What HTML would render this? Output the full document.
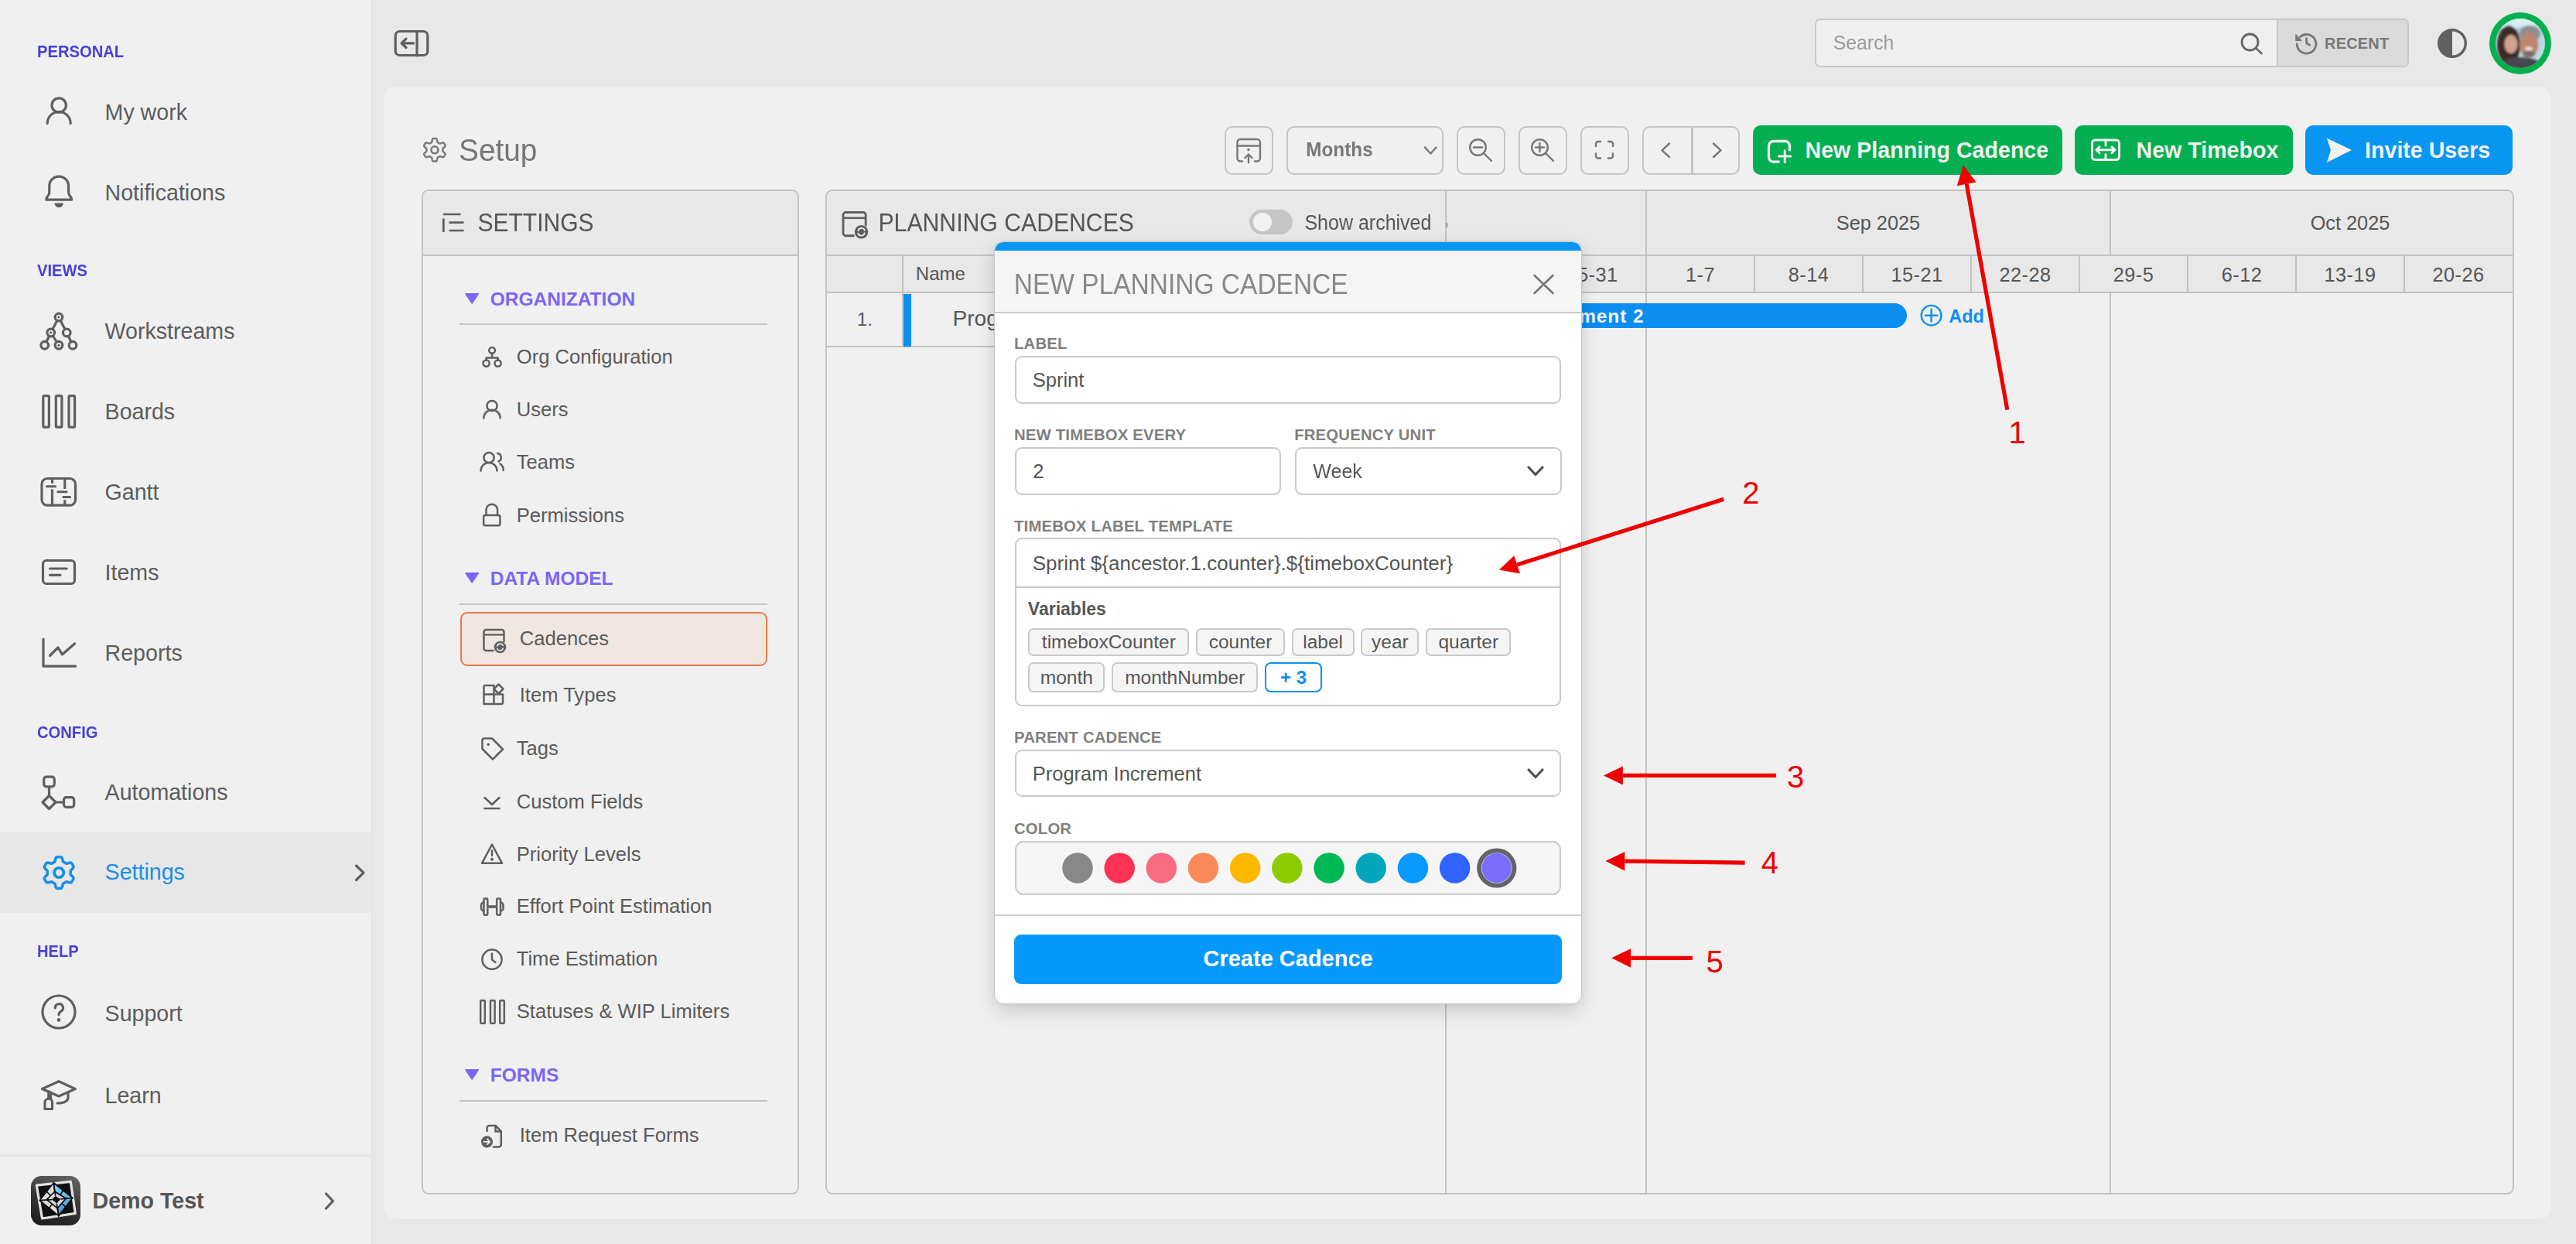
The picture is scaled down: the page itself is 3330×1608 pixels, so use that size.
<!DOCTYPE html>
<html><head><meta charset="utf-8"><style>
html,body{margin:0;padding:0;}
body{width:3330px;height:1608px;position:relative;overflow:hidden;background:#e8e8e8;font-family:"Liberation Sans", sans-serif;}
div{font-family:"Liberation Sans", sans-serif;}
svg{position:absolute;left:0;top:0;overflow:visible;}
</style></head><body>
<div style="position:absolute;left:0.00px;top:0.00px;width:480.00px;height:1608.00px;box-sizing:border-box;z-index:0;background:#f0f0f0"></div><div style="position:absolute;left:0.00px;top:1076.00px;width:480.00px;height:104.00px;box-sizing:border-box;z-index:0;background:#e7e7e7"></div><div style="position:absolute;left:479.50px;top:0.00px;width:1.50px;height:1608.00px;box-sizing:border-box;z-index:0;background:#e2e2e2"></div><div style="position:absolute;left:0.00px;top:1492.00px;width:480.00px;height:3.00px;box-sizing:border-box;z-index:0;background:#e6e6e6"></div><div style="position:absolute;left:47.99px;top:56.90px;font-size:20.2px;line-height:20.2px;font-weight:700;color:#4a3fd8;z-index:1;white-space:pre;letter-spacing:0px;transform:scaleY(1.08);transform-origin:0 17.10px">PERSONAL</div><div style="position:absolute;left:47.99px;top:340.40px;font-size:20.2px;line-height:20.2px;font-weight:700;color:#4a3fd8;z-index:1;white-space:pre;letter-spacing:0px;transform:scaleY(1.08);transform-origin:0 17.10px">VIEWS</div><div style="position:absolute;left:47.99px;top:936.90px;font-size:20.2px;line-height:20.2px;font-weight:700;color:#4a3fd8;z-index:1;white-space:pre;letter-spacing:0px;transform:scaleY(1.08);transform-origin:0 17.10px">CONFIG</div><div style="position:absolute;left:47.99px;top:1220.40px;font-size:20.2px;line-height:20.2px;font-weight:700;color:#4a3fd8;z-index:1;white-space:pre;letter-spacing:0px;transform:scaleY(1.08);transform-origin:0 17.10px">HELP</div><div style="position:absolute;left:135.57px;top:130.79px;font-size:28.6px;line-height:28.6px;font-weight:400;color:#5c5c5c;z-index:1;white-space:pre;">My work</div><div style="position:absolute;left:135.57px;top:234.79px;font-size:28.6px;line-height:28.6px;font-weight:400;color:#5c5c5c;z-index:1;white-space:pre;">Notifications</div><div style="position:absolute;left:135.57px;top:413.79px;font-size:28.6px;line-height:28.6px;font-weight:400;color:#5c5c5c;z-index:1;white-space:pre;">Workstreams</div><div style="position:absolute;left:135.57px;top:518.29px;font-size:28.6px;line-height:28.6px;font-weight:400;color:#5c5c5c;z-index:1;white-space:pre;">Boards</div><div style="position:absolute;left:135.57px;top:621.79px;font-size:28.6px;line-height:28.6px;font-weight:400;color:#5c5c5c;z-index:1;white-space:pre;">Gantt</div><div style="position:absolute;left:135.57px;top:725.79px;font-size:28.6px;line-height:28.6px;font-weight:400;color:#5c5c5c;z-index:1;white-space:pre;">Items</div><div style="position:absolute;left:135.57px;top:829.79px;font-size:28.6px;line-height:28.6px;font-weight:400;color:#5c5c5c;z-index:1;white-space:pre;">Reports</div><div style="position:absolute;left:135.57px;top:1009.79px;font-size:28.6px;line-height:28.6px;font-weight:400;color:#5c5c5c;z-index:1;white-space:pre;">Automations</div><div style="position:absolute;left:135.57px;top:1296.29px;font-size:28.6px;line-height:28.6px;font-weight:400;color:#5c5c5c;z-index:1;white-space:pre;">Support</div><div style="position:absolute;left:135.57px;top:1401.79px;font-size:28.6px;line-height:28.6px;font-weight:400;color:#5c5c5c;z-index:1;white-space:pre;">Learn</div><div style="position:absolute;left:135.57px;top:1113.29px;font-size:28.6px;line-height:28.6px;font-weight:400;color:#1a8fe8;z-index:1;white-space:pre;">Settings</div><div style="position:absolute;left:119.57px;top:1538.29px;font-size:28.6px;line-height:28.6px;font-weight:700;color:#555;z-index:1;white-space:pre;">Demo Test</div><div style="position:absolute;left:40.00px;top:1520.00px;width:64.00px;height:64.00px;box-sizing:border-box;z-index:1;background:linear-gradient(200deg,#6a6a6a 0%,#3a3a3a 45%,#1a1a1a 100%);border-radius:14px"></div><div style="position:absolute;left:2346.00px;top:24.00px;width:768.00px;height:63.00px;box-sizing:border-box;z-index:1;background:#efefef;border:2px solid #c8c8c8;border-radius:7px;overflow:hidden"><div style="position:absolute;left:595px;top:0;right:0;bottom:0;background:#dadada;border-left:2px solid #c8c8c8"></div></div><div style="position:absolute;left:2369.76px;top:44.01px;font-size:24.8px;line-height:24.8px;font-weight:400;color:#9a9a9a;z-index:2;white-space:pre;;transform:scaleY(1.05);transform-origin:0 20.99px">Search</div><div style="position:absolute;left:3005.00px;top:46.07px;font-size:20px;line-height:20px;font-weight:700;color:#777;z-index:2;white-space:pre;letter-spacing:0.2px">RECENT</div><div style="position:absolute;left:3218.00px;top:16.00px;width:80.00px;height:80.00px;box-sizing:border-box;z-index:1;border-radius:50%;background:#03b04d"></div><div style="position:absolute;left:496.00px;top:112.00px;width:2802.00px;height:1464.00px;box-sizing:border-box;z-index:0;background:#f0f0f0;border-radius:16px"></div><div style="position:absolute;left:593.06px;top:176.16px;font-size:38.8px;line-height:38.8px;font-weight:400;color:#777;z-index:1;white-space:pre;;transform:scaleY(1.05);transform-origin:0 32.84px">Setup</div><div style="position:absolute;left:1582.50px;top:162.50px;width:63.00px;height:63.00px;box-sizing:border-box;z-index:1;border:2px solid #c4c4c4;border-radius:10px;background:#f0f0f0"></div><div style="position:absolute;left:1662.50px;top:162.50px;width:203.00px;height:63.00px;box-sizing:border-box;z-index:1;border:2px solid #c4c4c4;border-radius:10px;background:#f0f0f0"></div><div style="position:absolute;left:1882.50px;top:162.50px;width:63.00px;height:63.00px;box-sizing:border-box;z-index:1;border:2px solid #c4c4c4;border-radius:10px;background:#f0f0f0"></div><div style="position:absolute;left:1962.50px;top:162.50px;width:63.00px;height:63.00px;box-sizing:border-box;z-index:1;border:2px solid #c4c4c4;border-radius:10px;background:#f0f0f0"></div><div style="position:absolute;left:2042.50px;top:162.50px;width:63.00px;height:63.00px;box-sizing:border-box;z-index:1;border:2px solid #c4c4c4;border-radius:10px;background:#f0f0f0"></div><div style="position:absolute;left:2122.50px;top:162.50px;width:126.50px;height:63.00px;box-sizing:border-box;z-index:1;border:2px solid #c4c4c4;border-radius:10px;background:#f0f0f0"></div><div style="position:absolute;left:2186.00px;top:164.00px;width:2.50px;height:60.00px;box-sizing:border-box;z-index:2;background:#c4c4c4"></div><div style="position:absolute;left:1688.29px;top:182.43px;font-size:24.3px;line-height:24.3px;font-weight:700;color:#777;z-index:2;white-space:pre;;transform:scaleY(1.04);transform-origin:0 20.57px">Months</div><div style="position:absolute;left:2266.00px;top:162.00px;width:399.50px;height:63.50px;box-sizing:border-box;z-index:1;background:#03af50;border-radius:10px"></div><div style="position:absolute;left:2682.00px;top:162.00px;width:282.00px;height:63.50px;box-sizing:border-box;z-index:1;background:#03af50;border-radius:10px"></div><div style="position:absolute;left:2980.00px;top:162.00px;width:268.00px;height:63.50px;box-sizing:border-box;z-index:1;background:#0896f2;border-radius:10px"></div><div style="position:absolute;left:2333.57px;top:179.79px;font-size:28.6px;line-height:28.6px;font-weight:700;color:#f2f2f2;z-index:2;white-space:pre;">New Planning Cadence</div><div style="position:absolute;left:2761.57px;top:179.79px;font-size:28.6px;line-height:28.6px;font-weight:700;color:#f2f2f2;z-index:2;white-space:pre;">New Timebox</div><div style="position:absolute;left:3057.07px;top:179.79px;font-size:28.6px;line-height:28.6px;font-weight:700;color:#f2f2f2;z-index:2;white-space:pre;">Invite Users</div><div style="position:absolute;left:544.50px;top:244.50px;width:488.50px;height:1299.50px;box-sizing:border-box;z-index:1;border:2px solid #c2c2c2;border-radius:9px;background:#f0f0f0;overflow:hidden"><div style="position:absolute;left:0;top:0;right:0;height:82px;background:#e8e8e8;border-bottom:2px solid #c2c2c2"></div></div><div style="position:absolute;left:617.50px;top:273.61px;font-size:30px;line-height:30px;font-weight:400;color:#555;z-index:2;white-space:pre;;transform:scaleY(1.1);transform-origin:0 25.39px">SETTINGS</div><div style="position:absolute;left:633.77px;top:375.26px;font-size:24.5px;line-height:24.5px;font-weight:700;color:#7b66f0;z-index:2;white-space:pre;">ORGANIZATION</div><div style="position:absolute;left:594.00px;top:418.00px;width:398.00px;height:2.20px;box-sizing:border-box;z-index:2;background:#c4c4c4"></div><div style="position:absolute;left:633.77px;top:736.26px;font-size:24.5px;line-height:24.5px;font-weight:700;color:#7b66f0;z-index:2;white-space:pre;">DATA MODEL</div><div style="position:absolute;left:594.00px;top:780.00px;width:398.00px;height:2.20px;box-sizing:border-box;z-index:2;background:#c4c4c4"></div><div style="position:absolute;left:633.77px;top:1378.26px;font-size:24.5px;line-height:24.5px;font-weight:700;color:#7b66f0;z-index:2;white-space:pre;">FORMS</div><div style="position:absolute;left:594.00px;top:1422.00px;width:398.00px;height:2.20px;box-sizing:border-box;z-index:2;background:#c4c4c4"></div><div style="position:absolute;left:594.50px;top:791.00px;width:397.00px;height:70.00px;box-sizing:border-box;z-index:2;border:2.5px solid #e8794a;border-radius:9px;background:#f0e6e1"></div><div style="position:absolute;left:667.72px;top:449.33px;font-size:25.6px;line-height:25.6px;font-weight:400;color:#5a5a5a;z-index:3;white-space:pre;">Org Configuration</div><div style="position:absolute;left:667.72px;top:517.33px;font-size:25.6px;line-height:25.6px;font-weight:400;color:#5a5a5a;z-index:3;white-space:pre;">Users</div><div style="position:absolute;left:667.72px;top:585.33px;font-size:25.6px;line-height:25.6px;font-weight:400;color:#5a5a5a;z-index:3;white-space:pre;">Teams</div><div style="position:absolute;left:667.72px;top:654.33px;font-size:25.6px;line-height:25.6px;font-weight:400;color:#5a5a5a;z-index:3;white-space:pre;">Permissions</div><div style="position:absolute;left:671.72px;top:812.93px;font-size:25.6px;line-height:25.6px;font-weight:400;color:#5a5a5a;z-index:3;white-space:pre;">Cadences</div><div style="position:absolute;left:671.72px;top:885.73px;font-size:25.6px;line-height:25.6px;font-weight:400;color:#5a5a5a;z-index:3;white-space:pre;">Item Types</div><div style="position:absolute;left:667.72px;top:955.33px;font-size:25.6px;line-height:25.6px;font-weight:400;color:#5a5a5a;z-index:3;white-space:pre;">Tags</div><div style="position:absolute;left:667.72px;top:1023.63px;font-size:25.6px;line-height:25.6px;font-weight:400;color:#5a5a5a;z-index:3;white-space:pre;">Custom Fields</div><div style="position:absolute;left:667.72px;top:1091.83px;font-size:25.6px;line-height:25.6px;font-weight:400;color:#5a5a5a;z-index:3;white-space:pre;">Priority Levels</div><div style="position:absolute;left:667.72px;top:1159.33px;font-size:25.6px;line-height:25.6px;font-weight:400;color:#5a5a5a;z-index:3;white-space:pre;">Effort Point Estimation</div><div style="position:absolute;left:667.72px;top:1227.33px;font-size:25.6px;line-height:25.6px;font-weight:400;color:#5a5a5a;z-index:3;white-space:pre;">Time Estimation</div><div style="position:absolute;left:667.72px;top:1295.33px;font-size:25.6px;line-height:25.6px;font-weight:400;color:#5a5a5a;z-index:3;white-space:pre;">Statuses &amp; WIP Limiters</div><div style="position:absolute;left:671.72px;top:1455.33px;font-size:25.6px;line-height:25.6px;font-weight:400;color:#5a5a5a;z-index:3;white-space:pre;">Item Request Forms</div><div style="position:absolute;left:1067.00px;top:244.50px;width:2183.20px;height:1299.50px;box-sizing:border-box;z-index:1;border:2px solid #c2c2c2;border-radius:9px;background:#f0f0f0;overflow:hidden"><div style="position:absolute;left:0;top:0;right:0;height:82px;background:#e8e8e8;border-bottom:2px solid #c2c2c2"></div><div style="position:absolute;left:0;top:84px;width:800px;height:46px;background:#e8e8e8;border-bottom:2px solid #c2c2c2"></div><div style="position:absolute;left:800px;top:84px;right:0;height:46px;background:#e8e8e8;border-bottom:2px solid #c2c2c2"></div><div style="position:absolute;left:0;top:132px;width:800px;height:68px;border-bottom:2px solid #c2c2c2"></div></div><div style="position:absolute;left:1135.49px;top:274.04px;font-size:30.2px;line-height:30.2px;font-weight:400;color:#555;z-index:3;white-space:pre;;transform:scaleY(1.1);transform-origin:0 25.56px">PLANNING CADENCES</div><div style="position:absolute;left:1614.80px;top:271.00px;width:55.80px;height:32.00px;box-sizing:border-box;z-index:3;background:#c6c6c6;border-radius:16px"><div style="position:absolute;left:5px;top:4px;width:24px;height:24px;border-radius:50%;background:#f2f2f2"></div></div><div style="position:absolute;left:1686.45px;top:276.24px;font-size:25px;line-height:25px;font-weight:400;color:#555;z-index:3;white-space:pre;;transform:scaleY(1.08);transform-origin:0 21.16px">Show archived</div><div style="position:absolute;left:1166.00px;top:329.00px;width:2.00px;height:118.00px;box-sizing:border-box;z-index:3;background:#c2c2c2"></div><div style="position:absolute;left:1183.80px;top:342.08px;font-size:24px;line-height:24px;font-weight:400;color:#555;z-index:3;white-space:pre;">Name</div><div style="position:absolute;left:1107.80px;top:401.08px;font-size:24px;line-height:24px;font-weight:400;color:#555;z-index:3;white-space:pre;">1.</div><div style="position:absolute;left:1168.00px;top:380.00px;width:10.30px;height:67.80px;box-sizing:border-box;z-index:3;background:#0a8ff0"></div><div style="position:absolute;left:1231.60px;top:398.30px;font-size:28px;line-height:28px;font-weight:400;color:#555;z-index:3;white-space:pre;">Program Increment 2</div><div style="position:absolute;left:1867.60px;top:244.50px;width:2.20px;height:1298.50px;box-sizing:border-box;z-index:4;background:#c2c2c2"></div><div style="position:absolute;left:2127.00px;top:244.50px;width:2.20px;height:84.50px;box-sizing:border-box;z-index:4;background:#c2c2c2"></div><div style="position:absolute;left:2127.00px;top:377.00px;width:2.20px;height:1166.00px;box-sizing:border-box;z-index:4;background:#c2c2c2"></div><div style="position:absolute;left:2727.00px;top:244.50px;width:2.20px;height:84.50px;box-sizing:border-box;z-index:4;background:#c2c2c2"></div><div style="position:absolute;left:2727.00px;top:377.00px;width:2.20px;height:1166.00px;box-sizing:border-box;z-index:4;background:#c2c2c2"></div><div style="position:absolute;left:1987.00px;top:330.00px;width:2.20px;height:47.00px;box-sizing:border-box;z-index:4;background:#c2c2c2"></div><div style="position:absolute;left:2127.00px;top:330.00px;width:2.20px;height:47.00px;box-sizing:border-box;z-index:4;background:#c2c2c2"></div><div style="position:absolute;left:2267.00px;top:330.00px;width:2.20px;height:47.00px;box-sizing:border-box;z-index:4;background:#c2c2c2"></div><div style="position:absolute;left:2407.00px;top:330.00px;width:2.20px;height:47.00px;box-sizing:border-box;z-index:4;background:#c2c2c2"></div><div style="position:absolute;left:2547.00px;top:330.00px;width:2.20px;height:47.00px;box-sizing:border-box;z-index:4;background:#c2c2c2"></div><div style="position:absolute;left:2687.00px;top:330.00px;width:2.20px;height:47.00px;box-sizing:border-box;z-index:4;background:#c2c2c2"></div><div style="position:absolute;left:2827.00px;top:330.00px;width:2.20px;height:47.00px;box-sizing:border-box;z-index:4;background:#c2c2c2"></div><div style="position:absolute;left:2967.00px;top:330.00px;width:2.20px;height:47.00px;box-sizing:border-box;z-index:4;background:#c2c2c2"></div><div style="position:absolute;left:3107.00px;top:330.00px;width:2.20px;height:47.00px;box-sizing:border-box;z-index:4;background:#c2c2c2"></div><div style="position:absolute;left:1869.8px;top:244.5px;width:1377px;height:140px;overflow:hidden;z-index:4"><div style="position:absolute;left:-251.80px;width:400px;text-align:center;top:31.08px;font-size:25.3px;line-height:25.3px;color:#555">Aug 2025</div><div style="position:absolute;left:358.20px;width:400px;text-align:center;top:31.08px;font-size:25.3px;line-height:25.3px;color:#555">Sep 2025</div><div style="position:absolute;left:968.20px;width:400px;text-align:center;top:31.08px;font-size:25.3px;line-height:25.3px;color:#555">Oct 2025</div><div style="position:absolute;left:-151.80px;width:400px;text-align:center;top:98.08px;font-size:25.3px;line-height:25.3px;color:#555;letter-spacing:0.5px">18-24</div><div style="position:absolute;left:-11.80px;width:400px;text-align:center;top:98.08px;font-size:25.3px;line-height:25.3px;color:#555;letter-spacing:0.5px">25-31</div><div style="position:absolute;left:128.20px;width:400px;text-align:center;top:98.08px;font-size:25.3px;line-height:25.3px;color:#555;letter-spacing:0.5px">1-7</div><div style="position:absolute;left:268.20px;width:400px;text-align:center;top:98.08px;font-size:25.3px;line-height:25.3px;color:#555;letter-spacing:0.5px">8-14</div><div style="position:absolute;left:408.20px;width:400px;text-align:center;top:98.08px;font-size:25.3px;line-height:25.3px;color:#555;letter-spacing:0.5px">15-21</div><div style="position:absolute;left:548.20px;width:400px;text-align:center;top:98.08px;font-size:25.3px;line-height:25.3px;color:#555;letter-spacing:0.5px">22-28</div><div style="position:absolute;left:688.20px;width:400px;text-align:center;top:98.08px;font-size:25.3px;line-height:25.3px;color:#555;letter-spacing:0.5px">29-5</div><div style="position:absolute;left:828.20px;width:400px;text-align:center;top:98.08px;font-size:25.3px;line-height:25.3px;color:#555;letter-spacing:0.5px">6-12</div><div style="position:absolute;left:968.20px;width:400px;text-align:center;top:98.08px;font-size:25.3px;line-height:25.3px;color:#555;letter-spacing:0.5px">13-19</div><div style="position:absolute;left:1108.20px;width:400px;text-align:center;top:98.08px;font-size:25.3px;line-height:25.3px;color:#555;letter-spacing:0.5px">20-26</div></div><div style="position:absolute;left:1880.00px;top:392.00px;width:584.50px;height:31.50px;box-sizing:border-box;z-index:5;background:#0a8ff0;border-radius:16px"></div><div style="position:absolute;right:1204.50px;top:396.76px;font-size:24.5px;line-height:24.5px;font-weight:700;color:#f4f4f4;z-index:6;white-space:pre;letter-spacing:0.9px">Program Increment 2</div><div style="position:absolute;left:2519.22px;top:397.61px;font-size:23.5px;line-height:23.5px;font-weight:700;color:#0a8ff0;z-index:6;white-space:pre;">Add</div><div style="position:absolute;left:1285.40px;top:311.50px;width:759.60px;height:986.00px;box-sizing:border-box;z-index:10;background:#fff;border:1.6px solid #c8c6c4;border-radius:12px;box-shadow:0 10px 24px rgba(0,0,0,0.15), 0 0 6px rgba(0,0,0,0.05);overflow:hidden"><div style="position:absolute;left:0;right:0;top:0;height:11.5px;background:#0896f5;border-radius:11px 11px 0 0"></div><div style="position:absolute;left:0;right:0;top:11.5px;height:79px;background:#f5f5f5;border-radius:10px 10px 0 0;border-bottom:2.5px solid #cbcbcb"></div><div style="position:absolute;left:0;right:0;top:869.5px;height:2px;background:#cdcdcd"></div></div><div style="position:absolute;left:1310.83px;top:352.04px;font-size:33.5px;line-height:33.5px;font-weight:400;color:#888;z-index:11;white-space:pre;;transform:scaleY(1.1);transform-origin:0 28.36px">NEW PLANNING CADENCE</div><div style="position:absolute;left:1310.98px;top:433.92px;font-size:20.3px;line-height:20.3px;font-weight:700;color:#7f7f7f;z-index:11;white-space:pre;letter-spacing:0.2px">LABEL</div><div style="position:absolute;left:1310.98px;top:551.82px;font-size:20.3px;line-height:20.3px;font-weight:700;color:#7f7f7f;z-index:11;white-space:pre;letter-spacing:0.2px">NEW TIMEBOX EVERY</div><div style="position:absolute;left:1673.18px;top:551.82px;font-size:20.3px;line-height:20.3px;font-weight:700;color:#7f7f7f;z-index:11;white-space:pre;letter-spacing:0.2px">FREQUENCY UNIT</div><div style="position:absolute;left:1310.98px;top:670.32px;font-size:20.3px;line-height:20.3px;font-weight:700;color:#7f7f7f;z-index:11;white-space:pre;letter-spacing:0.2px">TIMEBOX LABEL TEMPLATE</div><div style="position:absolute;left:1310.98px;top:942.52px;font-size:20.3px;line-height:20.3px;font-weight:700;color:#7f7f7f;z-index:11;white-space:pre;letter-spacing:0.2px">PARENT CADENCE</div><div style="position:absolute;left:1310.98px;top:1060.82px;font-size:20.3px;line-height:20.3px;font-weight:700;color:#7f7f7f;z-index:11;white-space:pre;letter-spacing:0.2px">COLOR</div><div style="position:absolute;left:1311.80px;top:459.80px;width:706.70px;height:62.20px;box-sizing:border-box;z-index:11;border:2px solid #c9c9c9;border-radius:9px;background:#fff"></div><div style="position:absolute;left:1334.72px;top:479.41px;font-size:25.5px;line-height:25.5px;font-weight:400;color:#555;z-index:12;white-space:pre;">Sprint</div><div style="position:absolute;left:1311.80px;top:578.00px;width:344.20px;height:62.00px;box-sizing:border-box;z-index:11;border:2px solid #c9c9c9;border-radius:9px;background:#fff"></div><div style="position:absolute;left:1335.32px;top:596.71px;font-size:25.5px;line-height:25.5px;font-weight:400;color:#555;z-index:12;white-space:pre;">2</div><div style="position:absolute;left:1674.00px;top:578.00px;width:344.50px;height:62.00px;box-sizing:border-box;z-index:11;border:2px solid #c9c9c9;border-radius:9px;background:#fff"></div><div style="position:absolute;left:1697.35px;top:597.14px;font-size:25px;line-height:25px;font-weight:400;color:#555;z-index:12;white-space:pre;;transform:scaleY(1.06);transform-origin:0 21.16px">Week</div><div style="position:absolute;left:1311.80px;top:695.40px;width:706.70px;height:217.60px;box-sizing:border-box;z-index:11;border:2px solid #c9c9c9;border-radius:9px;background:#fff"><div style="position:absolute;left:0;right:0;top:60.5px;height:2px;background:#c9c9c9"></div></div><div style="position:absolute;left:1334.70px;top:715.19px;font-size:26px;line-height:26px;font-weight:400;color:#555;z-index:12;white-space:pre;">Sprint ${ancestor.1.counter}.${timeboxCounter}</div><div style="position:absolute;left:1328.85px;top:775.63px;font-size:23px;line-height:23px;font-weight:700;color:#555;z-index:12;white-space:pre;">Variables</div><div style="position:absolute;left:1329.20px;top:812.20px;width:208.30px;height:35.40px;box-sizing:border-box;z-index:12;border:2px solid #c9c9c9;border-radius:7px;background:#f5f5f5"></div><div style="position:absolute;left:433.35px;width:2000px;text-align:center;top:818.36px;font-size:24.5px;line-height:24.5px;font-weight:400;color:#555;z-index:13;white-space:pre;">timeboxCounter</div><div style="position:absolute;left:1546.40px;top:812.20px;width:114.20px;height:35.40px;box-sizing:border-box;z-index:12;border:2px solid #c9c9c9;border-radius:7px;background:#f5f5f5"></div><div style="position:absolute;left:603.50px;width:2000px;text-align:center;top:818.36px;font-size:24.5px;line-height:24.5px;font-weight:400;color:#555;z-index:13;white-space:pre;">counter</div><div style="position:absolute;left:1669.50px;top:812.20px;width:81.20px;height:35.40px;box-sizing:border-box;z-index:12;border:2px solid #c9c9c9;border-radius:7px;background:#f5f5f5"></div><div style="position:absolute;left:710.10px;width:2000px;text-align:center;top:818.36px;font-size:24.5px;line-height:24.5px;font-weight:400;color:#555;z-index:13;white-space:pre;">label</div><div style="position:absolute;left:1759.40px;top:812.20px;width:74.90px;height:35.40px;box-sizing:border-box;z-index:12;border:2px solid #c9c9c9;border-radius:7px;background:#f5f5f5"></div><div style="position:absolute;left:796.85px;width:2000px;text-align:center;top:818.36px;font-size:24.5px;line-height:24.5px;font-weight:400;color:#555;z-index:13;white-space:pre;">year</div><div style="position:absolute;left:1843.30px;top:812.20px;width:110.00px;height:35.40px;box-sizing:border-box;z-index:12;border:2px solid #c9c9c9;border-radius:7px;background:#f5f5f5"></div><div style="position:absolute;left:898.30px;width:2000px;text-align:center;top:818.36px;font-size:24.5px;line-height:24.5px;font-weight:400;color:#555;z-index:13;white-space:pre;">quarter</div><div style="position:absolute;left:1329.20px;top:856.30px;width:99.30px;height:39.10px;box-sizing:border-box;z-index:12;border:2px solid #c9c9c9;border-radius:7px;background:#f5f5f5"></div><div style="position:absolute;left:378.85px;width:2000px;text-align:center;top:864.06px;font-size:24.5px;line-height:24.5px;font-weight:400;color:#555;z-index:13;white-space:pre;">month</div><div style="position:absolute;left:1437.20px;top:856.30px;width:189.10px;height:39.10px;box-sizing:border-box;z-index:12;border:2px solid #c9c9c9;border-radius:7px;background:#f5f5f5"></div><div style="position:absolute;left:531.75px;width:2000px;text-align:center;top:864.06px;font-size:24.5px;line-height:24.5px;font-weight:400;color:#555;z-index:13;white-space:pre;">monthNumber</div><div style="position:absolute;left:1635.30px;top:856.30px;width:73.40px;height:39.10px;box-sizing:border-box;z-index:12;border:2.5px solid #0a8ff0;border-radius:8px;background:#fff"></div><div style="position:absolute;left:672.00px;width:2000px;text-align:center;top:864.48px;font-size:24px;line-height:24px;font-weight:700;color:#0a8ff0;z-index:13;white-space:pre;">+ 3</div><div style="position:absolute;left:1311.80px;top:968.70px;width:706.70px;height:61.80px;box-sizing:border-box;z-index:11;border:2px solid #c9c9c9;border-radius:9px;background:#fff"></div><div style="position:absolute;left:1334.72px;top:988.01px;font-size:25.5px;line-height:25.5px;font-weight:400;color:#555;z-index:12;white-space:pre;">Program Increment</div><div style="position:absolute;left:1312.00px;top:1087.00px;width:706.20px;height:70.00px;box-sizing:border-box;z-index:11;border:2px solid #c9c9c9;border-radius:11px;background:#f5f5f5"></div><div style="position:absolute;left:1311.40px;top:1208.00px;width:707.40px;height:63.50px;box-sizing:border-box;z-index:11;background:#0599fe;border-radius:9px"></div><div style="position:absolute;left:665.10px;width:2000px;text-align:center;top:1225.45px;font-size:29px;line-height:29px;font-weight:700;color:#ffffff;z-index:12;white-space:pre;">Create Cadence</div><div style="position:absolute;left:2596.40px;top:539.14px;font-size:40px;line-height:40px;font-weight:400;color:#ee0000;z-index:21;white-space:pre;">1</div><div style="position:absolute;left:2252.30px;top:617.34px;font-size:40px;line-height:40px;font-weight:400;color:#ee0000;z-index:21;white-space:pre;">2</div><div style="position:absolute;left:2310.00px;top:984.04px;font-size:40px;line-height:40px;font-weight:400;color:#ee0000;z-index:21;white-space:pre;">3</div><div style="position:absolute;left:2276.70px;top:1094.64px;font-size:40px;line-height:40px;font-weight:400;color:#ee0000;z-index:21;white-space:pre;">4</div><div style="position:absolute;left:2205.40px;top:1223.24px;font-size:40px;line-height:40px;font-weight:400;color:#ee0000;z-index:21;white-space:pre;">5</div>
<svg width="3330" height="1608" viewBox="0 0 3330 1608" style="z-index:5"><circle cx="76.2" cy="136" r="9.2" fill="none" stroke="#5f5f5f" stroke-width="3.2" stroke-linecap="round" stroke-linejoin="round"/><path d="M61.2 159.5 a15 15 0 0 1 30 0" fill="none" stroke="#5f5f5f" stroke-width="3.2" stroke-linecap="round" stroke-linejoin="round"/><path d="M59.8 258.2 Q59.8 255.5 62.5 252.5 Q63.8 251 63.8 247.5 V240.5 A12.4 12.4 0 0 1 88.6 240.5 V247.5 Q88.6 251 89.9 252.5 Q92.6 255.5 92.6 258.2 Z" fill="none" stroke="#5f5f5f" stroke-width="3.2" stroke-linecap="round" stroke-linejoin="round"/><path d="M70.5 262.5 h11.4 a5.7 5.7 0 0 1 -11.4 0z" fill="#5f5f5f"/><line x1="73.72" y1="414.45" x2="68.03" y2="425.55" fill="none" stroke="#5f5f5f" stroke-width="3.2" stroke-linecap="round" stroke-linejoin="round" stroke-width="2.8"/><line x1="78.28" y1="414.45" x2="83.97" y2="425.55" fill="none" stroke="#5f5f5f" stroke-width="3.2" stroke-linecap="round" stroke-linejoin="round" stroke-width="2.8"/><line x1="63.54" y1="434.49" x2="59.96" y2="441.76" fill="none" stroke="#5f5f5f" stroke-width="3.2" stroke-linecap="round" stroke-linejoin="round" stroke-width="2.8"/><line x1="68.42" y1="434.23" x2="73.33" y2="442.02" fill="none" stroke="#5f5f5f" stroke-width="3.2" stroke-linecap="round" stroke-linejoin="round" stroke-width="2.8"/><line x1="88.40" y1="434.51" x2="91.85" y2="441.74" fill="none" stroke="#5f5f5f" stroke-width="3.2" stroke-linecap="round" stroke-linejoin="round" stroke-width="2.8"/><circle cx="76" cy="410" r="4.8" fill="none" stroke="#5f5f5f" stroke-width="3.2" stroke-linecap="round" stroke-linejoin="round" stroke-width="2.8"/><circle cx="76" cy="410" r="1.6" fill="#5f5f5f"/><circle cx="65.75" cy="430" r="4.8" fill="none" stroke="#5f5f5f" stroke-width="3.2" stroke-linecap="round" stroke-linejoin="round" stroke-width="2.8"/><circle cx="65.75" cy="430" r="1.6" fill="#5f5f5f"/><circle cx="86.25" cy="430" r="4.8" fill="none" stroke="#5f5f5f" stroke-width="3.2" stroke-linecap="round" stroke-linejoin="round" stroke-width="2.8"/><circle cx="57.75" cy="446.25" r="4.8" fill="none" stroke="#5f5f5f" stroke-width="3.2" stroke-linecap="round" stroke-linejoin="round" stroke-width="2.8"/><circle cx="76" cy="446.25" r="4.8" fill="none" stroke="#5f5f5f" stroke-width="3.2" stroke-linecap="round" stroke-linejoin="round" stroke-width="2.8"/><circle cx="76" cy="446.25" r="1.6" fill="#5f5f5f"/><circle cx="94" cy="446.25" r="4.8" fill="none" stroke="#5f5f5f" stroke-width="3.2" stroke-linecap="round" stroke-linejoin="round" stroke-width="2.8"/><rect x="55.8" y="511.6" width="7.6" height="40.6" rx="1.6" fill="none" stroke="#5f5f5f" stroke-width="3.2" stroke-linecap="round" stroke-linejoin="round" stroke-width="3"/><rect x="72.3" y="511.6" width="7.6" height="40.6" rx="1.6" fill="none" stroke="#5f5f5f" stroke-width="3.2" stroke-linecap="round" stroke-linejoin="round" stroke-width="3"/><rect x="89" y="511.6" width="7.6" height="40.6" rx="1.6" fill="none" stroke="#5f5f5f" stroke-width="3.2" stroke-linecap="round" stroke-linejoin="round" stroke-width="3"/><rect x="54" y="618.5" width="43.5" height="34.6" rx="7" fill="none" stroke="#5f5f5f" stroke-width="3.2" stroke-linecap="round" stroke-linejoin="round" stroke-width="3"/><path d="M67.5 620 V652 M83.75 620 V652" fill="none" stroke="#5f5f5f" stroke-width="3.2" stroke-linecap="round" stroke-linejoin="round" stroke-width="2.8"/><path d="M59.5 628.75 H72.5 M74 635.75 H87 M81 642.5 H91.5" stroke="#f0f0f0" stroke-width="7.5" stroke-linecap="round"/><path d="M60.5 628.75 H71.5 M75 635.75 H86 M82 642.5 H90.5" fill="none" stroke="#5f5f5f" stroke-width="3.2" stroke-linecap="round" stroke-linejoin="round" stroke-width="3.6"/><rect x="55.5" y="724.5" width="41" height="30" rx="4.5" fill="none" stroke="#5f5f5f" stroke-width="3.2" stroke-linecap="round" stroke-linejoin="round" stroke-width="3"/><path d="M64.5 735 H86.2 M64.5 743.3 H78" fill="none" stroke="#5f5f5f" stroke-width="3.2" stroke-linecap="round" stroke-linejoin="round" stroke-width="3.2"/><path d="M56 826 V861.2 H97.5" fill="none" stroke="#5f5f5f" stroke-width="3.2" stroke-linecap="round" stroke-linejoin="round" stroke-width="3" stroke-linecap="butt"/><path d="M64.5 847.5 L75 837 L80.5 846 L96.5 832" fill="none" stroke="#5f5f5f" stroke-width="3.2" stroke-linecap="round" stroke-linejoin="round" stroke-width="3.2"/><rect x="56.7" y="1004.2" width="13.6" height="12.6" rx="3.2" fill="none" stroke="#5f5f5f" stroke-width="3.2" stroke-linecap="round" stroke-linejoin="round" stroke-width="2.8"/><path d="M63.5 1017 V1028.5" fill="none" stroke="#5f5f5f" stroke-width="3.2" stroke-linecap="round" stroke-linejoin="round" stroke-width="2.8"/><path d="M63.5 1028.5 L72 1037 L63.5 1045.5 L55 1037 Z" fill="none" stroke="#5f5f5f" stroke-width="3.2" stroke-linecap="round" stroke-linejoin="round" stroke-width="2.8"/><path d="M72 1037 H82" fill="none" stroke="#5f5f5f" stroke-width="3.2" stroke-linecap="round" stroke-linejoin="round" stroke-width="2.8"/><rect x="82.5" y="1030.7" width="13.2" height="12.6" rx="3.2" fill="none" stroke="#5f5f5f" stroke-width="3.2" stroke-linecap="round" stroke-linejoin="round" stroke-width="2.8"/><path d="M76.20 1107.70 L76.73 1107.71 L77.26 1107.73 L77.79 1107.76 L78.32 1107.81 L78.85 1107.89 L79.35 1108.14 L79.80 1108.59 L80.19 1109.24 L80.51 1110.05 L80.77 1110.95 L80.98 1111.85 L81.18 1112.67 L81.39 1113.33 L81.64 1113.82 L81.95 1114.12 L82.30 1114.30 L82.66 1114.46 L83.01 1114.63 L83.36 1114.82 L83.70 1115.01 L84.04 1115.21 L84.37 1115.42 L84.70 1115.64 L85.02 1115.86 L85.34 1116.08 L85.76 1116.20 L86.30 1116.17 L86.99 1116.02 L87.79 1115.78 L88.68 1115.52 L89.59 1115.30 L90.45 1115.17 L91.21 1115.18 L91.83 1115.34 L92.29 1115.65 L92.62 1116.07 L92.93 1116.50 L93.23 1116.94 L93.51 1117.39 L93.78 1117.85 L94.04 1118.31 L94.29 1118.78 L94.52 1119.26 L94.74 1119.74 L94.94 1120.24 L94.98 1120.79 L94.81 1121.41 L94.44 1122.07 L93.90 1122.76 L93.25 1123.43 L92.58 1124.07 L91.97 1124.65 L91.50 1125.16 L91.20 1125.62 L91.09 1126.04 L91.12 1126.43 L91.15 1126.82 L91.18 1127.21 L91.19 1127.61 L91.20 1128.00 L91.19 1128.39 L91.18 1128.79 L91.15 1129.18 L91.12 1129.57 L91.09 1129.96 L91.20 1130.38 L91.50 1130.84 L91.97 1131.35 L92.58 1131.93 L93.25 1132.57 L93.90 1133.24 L94.44 1133.93 L94.81 1134.59 L94.98 1135.21 L94.94 1135.76 L94.74 1136.26 L94.52 1136.74 L94.29 1137.22 L94.04 1137.69 L93.78 1138.15 L93.51 1138.61 L93.23 1139.06 L92.93 1139.50 L92.62 1139.93 L92.29 1140.35 L91.83 1140.66 L91.21 1140.82 L90.45 1140.83 L89.59 1140.70 L88.68 1140.48 L87.79 1140.22 L86.99 1139.98 L86.30 1139.83 L85.76 1139.80 L85.34 1139.92 L85.02 1140.14 L84.70 1140.36 L84.37 1140.58 L84.04 1140.79 L83.70 1140.99 L83.36 1141.18 L83.01 1141.37 L82.66 1141.54 L82.30 1141.70 L81.95 1141.88 L81.64 1142.18 L81.39 1142.67 L81.18 1143.33 L80.98 1144.15 L80.77 1145.05 L80.51 1145.95 L80.19 1146.76 L79.80 1147.41 L79.35 1147.86 L78.85 1148.11 L78.32 1148.19 L77.79 1148.24 L77.26 1148.27 L76.73 1148.29 L76.20 1148.30 L75.67 1148.29 L75.14 1148.27 L74.61 1148.24 L74.08 1148.19 L73.55 1148.11 L73.05 1147.86 L72.60 1147.41 L72.21 1146.76 L71.89 1145.95 L71.63 1145.05 L71.42 1144.15 L71.22 1143.33 L71.01 1142.67 L70.76 1142.18 L70.45 1141.88 L70.10 1141.70 L69.74 1141.54 L69.39 1141.37 L69.04 1141.18 L68.70 1140.99 L68.36 1140.79 L68.03 1140.58 L67.70 1140.36 L67.38 1140.14 L67.06 1139.92 L66.64 1139.80 L66.10 1139.83 L65.41 1139.98 L64.61 1140.22 L63.72 1140.48 L62.81 1140.70 L61.95 1140.83 L61.19 1140.82 L60.57 1140.66 L60.11 1140.35 L59.78 1139.93 L59.47 1139.50 L59.17 1139.06 L58.89 1138.61 L58.62 1138.15 L58.36 1137.69 L58.11 1137.22 L57.88 1136.74 L57.66 1136.26 L57.46 1135.76 L57.42 1135.21 L57.59 1134.59 L57.96 1133.93 L58.50 1133.24 L59.15 1132.57 L59.82 1131.93 L60.43 1131.35 L60.90 1130.84 L61.20 1130.38 L61.31 1129.96 L61.28 1129.57 L61.25 1129.18 L61.22 1128.79 L61.21 1128.39 L61.20 1128.00 L61.21 1127.61 L61.22 1127.21 L61.25 1126.82 L61.28 1126.43 L61.31 1126.04 L61.20 1125.62 L60.90 1125.16 L60.43 1124.65 L59.82 1124.07 L59.15 1123.43 L58.50 1122.76 L57.96 1122.07 L57.59 1121.41 L57.42 1120.79 L57.46 1120.24 L57.66 1119.74 L57.88 1119.26 L58.11 1118.78 L58.36 1118.31 L58.62 1117.85 L58.89 1117.39 L59.17 1116.94 L59.47 1116.50 L59.78 1116.07 L60.11 1115.65 L60.57 1115.34 L61.19 1115.18 L61.95 1115.17 L62.81 1115.30 L63.72 1115.52 L64.61 1115.78 L65.41 1116.02 L66.10 1116.17 L66.64 1116.20 L67.06 1116.08 L67.38 1115.86 L67.70 1115.64 L68.03 1115.42 L68.36 1115.21 L68.70 1115.01 L69.04 1114.82 L69.39 1114.63 L69.74 1114.46 L70.10 1114.30 L70.45 1114.12 L70.76 1113.82 L71.01 1113.33 L71.22 1112.67 L71.42 1111.85 L71.63 1110.95 L71.89 1110.05 L72.21 1109.24 L72.60 1108.59 L73.05 1108.14 L73.55 1107.89 L74.08 1107.81 L74.61 1107.76 L75.14 1107.73 L75.67 1107.71Z" fill="none" stroke="#1a8fe8" stroke-width="3.6" stroke-linejoin="round"/><circle cx="76.2" cy="1128" r="6.1" fill="none" stroke="#1a8fe8" stroke-width="3.8"/><path d="M460.5 1119 L470 1128.2 L460.5 1137.5" fill="none" stroke="#5f5f5f" stroke-width="3.2" stroke-linecap="round" stroke-linejoin="round" stroke="#555" stroke-width="3"/><circle cx="76" cy="1308" r="21" fill="none" stroke="#5f5f5f" stroke-width="3.2" stroke-linecap="round" stroke-linejoin="round" stroke-width="4.2"/><path d="M71.3 1302.8 a5.1 5.1 0 1 1 7.6 4.4 c-2 1.3 -2.9 2.3 -2.9 4.6" fill="none" stroke="#5f5f5f" stroke-width="3.2" stroke-linecap="round" stroke-linejoin="round" stroke-width="3.6"/><circle cx="76" cy="1318.4" r="2.3" fill="#5f5f5f"/><path d="M54.5 1407.5 L76 1397.8 L97.3 1407.5 L76 1417 Z" fill="none" stroke="#5f5f5f" stroke-width="3.2" stroke-linecap="round" stroke-linejoin="round" stroke-width="3"/><path d="M65.5 1412 V1420 M88 1412 V1418.5 Q88 1426 74 1426" fill="none" stroke="#5f5f5f" stroke-width="3.2" stroke-linecap="round" stroke-linejoin="round" stroke-width="3"/><path d="M62.8 1410.5 V1420" fill="none" stroke="#5f5f5f" stroke-width="3.2" stroke-linecap="round" stroke-linejoin="round" stroke-width="3.2"/><path d="M58 1433.5 V1425 a4.75 4.75 0 0 1 9.5 0 V1433.5 Z" fill="none" stroke="#5f5f5f" stroke-width="3.2" stroke-linecap="round" stroke-linejoin="round" stroke-width="3.4"/><defs><linearGradient id="lgb" x1="0" y1="0" x2="0" y2="1"><stop offset="0" stop-color="#7fd3f0"/><stop offset="1" stop-color="#3d98de"/></linearGradient></defs><polygon points="47.3,1532.2 91.3,1527.3 97.3,1568.4 54.5,1575" fill="#101010" stroke="#e2e2e2" stroke-width="3.2" stroke-linejoin="round"/><polygon points="69.30,1529.00 93.60,1548.40 75.90,1571.60 51.30,1551.60" fill="#dcdcdc" stroke="#0c0c0c" stroke-width="1.6"/><polygon points="69.30,1529.00 93.60,1548.40 75.90,1571.60 74.20,1561.70 85.20,1549.30 70.70,1540.30" fill="url(#lgb)" stroke="#0c0c0c" stroke-width="1.6"/><polygon points="70.70,1540.30 85.20,1549.30 74.20,1561.70 60.30,1550.70" fill="#d8d8d8" stroke="#0c0c0c" stroke-width="1.6"/><polygon points="71.69,1545.91 78.22,1549.96 73.27,1555.54 67.01,1550.59" fill="#0e0e0e"/><line x1="69.3" y1="1529" x2="71.69" y2="1545.91" stroke="#0c0c0c" stroke-width="1.6"/><line x1="93.6" y1="1548.4" x2="78.22" y2="1549.96" stroke="#0c0c0c" stroke-width="1.6"/><line x1="75.9" y1="1571.6" x2="73.27" y2="1555.54" stroke="#0c0c0c" stroke-width="1.6"/><line x1="51.3" y1="1551.6" x2="67.01" y2="1550.59" stroke="#0c0c0c" stroke-width="1.6"/><line x1="81.45" y1="1538.70" x2="77.95" y2="1544.80" stroke="#0c0c0c" stroke-width="1.6"/><line x1="84.75" y1="1560.00" x2="79.70" y2="1555.50" stroke="#0c0c0c" stroke-width="1.6"/><line x1="63.60" y1="1561.60" x2="67.25" y2="1556.20" stroke="#0c0c0c" stroke-width="1.6"/><line x1="60.30" y1="1540.30" x2="65.50" y2="1545.50" stroke="#0c0c0c" stroke-width="1.6"/><path d="M421.5 1543 L430.5 1552.5 L421.5 1562" fill="none" stroke="#5f5f5f" stroke-width="3.2" stroke-linecap="round" stroke-linejoin="round" stroke="#555" stroke-width="3"/><rect x="511.2" y="40.5" width="41.6" height="31" rx="5.6" fill="none" stroke="#5f5f5f" stroke-width="3.2" stroke-linecap="round" stroke-linejoin="round" stroke-width="2.9"/><path d="M539 41 V72" fill="none" stroke="#5f5f5f" stroke-width="3.2" stroke-linecap="round" stroke-linejoin="round" stroke-width="2.9"/><path d="M534.5 55.8 H519 M525 50.2 L519 55.8 L525 61.5" fill="none" stroke="#5f5f5f" stroke-width="3.2" stroke-linecap="round" stroke-linejoin="round" stroke-width="2.9"/><circle cx="2908.5" cy="54.5" r="10.5" fill="none" stroke="#666" stroke-width="2.8"/><path d="M2916.5 62.5 L2923.5 69" stroke="#666" stroke-width="2.8" stroke-linecap="round"/><path d="M2969.3 57 A12.3 12.3 0 1 0 2973.5 47.5" fill="none" stroke="#777" stroke-width="2.9" stroke-linecap="round"/><path d="M2967.8 44.5 L2967.8 52.8 L2975.3 52.3 Z" fill="#777" stroke="#777" stroke-width="1" stroke-linejoin="round"/><path d="M2981.6 50 V55.8 L2985.8 58.3" fill="none" stroke="#777" stroke-width="2.9" stroke-linecap="round" stroke-linejoin="round"/><circle cx="3170" cy="56" r="17.3" fill="none" stroke="#616161" stroke-width="3.4"/><path d="M3170 38.7 A17.3 17.3 0 0 0 3170 73.3 Z" fill="#616161"/><defs><clipPath id="avc"><circle cx="3258" cy="56" r="32"/></clipPath><filter id="avb" x="-20%" y="-20%" width="140%" height="140%"><feGaussianBlur stdDeviation="1.6"/></filter></defs><g clip-path="url(#avc)"><rect x="3220" y="20" width="80" height="80" fill="#b8dbe6"/><g filter="url(#avb)"><rect x="3220" y="20" width="80" height="16" fill="#d4eef4"/><path d="M3226 40 L3290 30 L3292 45 L3240 55 Z" fill="#9fb8c2" opacity="0.6"/><ellipse cx="3243" cy="58" rx="15" ry="25" fill="#3a2a26"/><ellipse cx="3246" cy="57" rx="8.5" ry="12" fill="#d2a08e"/><ellipse cx="3270" cy="44" rx="13" ry="11" fill="#8e8e92"/><ellipse cx="3269" cy="58" rx="12" ry="16" fill="#bb8570"/><ellipse cx="3269" cy="70" rx="8" ry="4" fill="#7d6a62"/><ellipse cx="3258" cy="92" rx="34" ry="18" fill="#48454d"/><ellipse cx="3269" cy="63" rx="5" ry="2.5" fill="#e8e0d8"/></g></g><path d="M561.90 179.00 L562.29 179.01 L562.67 179.02 L563.06 179.05 L563.45 179.08 L563.83 179.14 L564.19 179.33 L564.51 179.69 L564.79 180.21 L565.01 180.86 L565.17 181.58 L565.31 182.30 L565.43 182.95 L565.56 183.48 L565.72 183.85 L565.92 184.09 L566.17 184.21 L566.42 184.32 L566.67 184.44 L566.91 184.57 L567.15 184.71 L567.39 184.85 L567.62 184.99 L567.85 185.15 L568.07 185.31 L568.30 185.46 L568.60 185.52 L569.01 185.47 L569.54 185.32 L570.16 185.10 L570.84 184.86 L571.55 184.64 L572.22 184.51 L572.81 184.48 L573.28 184.58 L573.63 184.80 L573.87 185.10 L574.10 185.42 L574.31 185.74 L574.52 186.07 L574.72 186.40 L574.91 186.74 L575.09 187.08 L575.26 187.43 L575.42 187.78 L575.56 188.14 L575.57 188.55 L575.42 189.01 L575.11 189.51 L574.66 190.02 L574.12 190.53 L573.56 191.00 L573.06 191.43 L572.67 191.80 L572.42 192.13 L572.33 192.43 L572.34 192.70 L572.37 192.98 L572.39 193.25 L572.40 193.53 L572.40 193.80 L572.40 194.07 L572.39 194.35 L572.37 194.62 L572.34 194.90 L572.33 195.17 L572.42 195.47 L572.67 195.80 L573.06 196.17 L573.56 196.60 L574.12 197.07 L574.66 197.58 L575.11 198.09 L575.42 198.59 L575.57 199.05 L575.56 199.46 L575.42 199.82 L575.26 200.17 L575.09 200.52 L574.91 200.86 L574.72 201.20 L574.52 201.53 L574.31 201.86 L574.10 202.18 L573.87 202.50 L573.63 202.80 L573.28 203.02 L572.81 203.12 L572.22 203.09 L571.55 202.96 L570.84 202.74 L570.16 202.50 L569.54 202.28 L569.01 202.13 L568.60 202.08 L568.30 202.14 L568.07 202.29 L567.85 202.45 L567.62 202.61 L567.39 202.75 L567.15 202.89 L566.91 203.03 L566.67 203.16 L566.42 203.28 L566.17 203.39 L565.92 203.51 L565.72 203.75 L565.56 204.12 L565.43 204.65 L565.31 205.30 L565.17 206.02 L565.01 206.74 L564.79 207.39 L564.51 207.91 L564.19 208.27 L563.83 208.46 L563.45 208.52 L563.06 208.55 L562.67 208.58 L562.29 208.59 L561.90 208.60 L561.51 208.59 L561.13 208.58 L560.74 208.55 L560.35 208.52 L559.97 208.46 L559.61 208.27 L559.29 207.91 L559.01 207.39 L558.79 206.74 L558.63 206.02 L558.49 205.30 L558.37 204.65 L558.24 204.12 L558.08 203.75 L557.88 203.51 L557.63 203.39 L557.38 203.28 L557.13 203.16 L556.89 203.03 L556.65 202.89 L556.41 202.75 L556.18 202.61 L555.95 202.45 L555.73 202.29 L555.50 202.14 L555.20 202.08 L554.79 202.13 L554.26 202.28 L553.64 202.50 L552.96 202.74 L552.25 202.96 L551.58 203.09 L550.99 203.12 L550.52 203.02 L550.17 202.80 L549.93 202.50 L549.70 202.18 L549.49 201.86 L549.28 201.53 L549.08 201.20 L548.89 200.86 L548.71 200.52 L548.54 200.17 L548.38 199.82 L548.24 199.46 L548.23 199.05 L548.38 198.59 L548.69 198.09 L549.14 197.58 L549.68 197.07 L550.24 196.60 L550.74 196.17 L551.13 195.80 L551.38 195.47 L551.47 195.17 L551.46 194.90 L551.43 194.62 L551.41 194.35 L551.40 194.07 L551.40 193.80 L551.40 193.53 L551.41 193.25 L551.43 192.98 L551.46 192.70 L551.47 192.43 L551.38 192.13 L551.13 191.80 L550.74 191.43 L550.24 191.00 L549.68 190.53 L549.14 190.02 L548.69 189.51 L548.38 189.01 L548.23 188.55 L548.24 188.14 L548.38 187.78 L548.54 187.43 L548.71 187.08 L548.89 186.74 L549.08 186.40 L549.28 186.07 L549.49 185.74 L549.70 185.42 L549.93 185.10 L550.17 184.80 L550.52 184.58 L550.99 184.48 L551.58 184.51 L552.25 184.64 L552.96 184.86 L553.64 185.10 L554.26 185.32 L554.79 185.47 L555.20 185.52 L555.50 185.46 L555.73 185.31 L555.95 185.15 L556.18 184.99 L556.41 184.85 L556.65 184.71 L556.89 184.57 L557.13 184.44 L557.38 184.32 L557.63 184.21 L557.88 184.09 L558.08 183.85 L558.24 183.48 L558.37 182.95 L558.49 182.30 L558.63 181.58 L558.79 180.86 L559.01 180.21 L559.29 179.69 L559.61 179.33 L559.97 179.14 L560.35 179.08 L560.74 179.05 L561.13 179.02 L561.51 179.01Z" fill="none" stroke="#7a7a7a" stroke-width="2.5" stroke-linejoin="round"/><circle cx="561.9" cy="193.8" r="4.5" fill="none" stroke="#7a7a7a" stroke-width="2.6"/><path d="M1606 208.5 H1603.5 a4 4 0 0 1 -4 -4 V184 a4 4 0 0 1 4 -4 H1625 a4 4 0 0 1 4 4 V204.5 a4 4 0 0 1 -4 4 H1622" fill="none" stroke="#777" stroke-width="2.4" stroke-linecap="round" stroke-linejoin="round"/><path d="M1599.5 188.5 H1629" fill="none" stroke="#777" stroke-width="2.4" stroke-linecap="round" stroke-linejoin="round"/><path d="M1614 210 V200 M1609.5 204 L1614 199.5 L1618.5 204" fill="none" stroke="#777" stroke-width="2.4" stroke-linecap="round" stroke-linejoin="round"/><circle cx="1614" cy="193.5" r="1.7" fill="#777"/><path d="M1842 190.5 L1849.3 198.5 L1856.5 190.5" fill="none" stroke="#777" stroke-width="2.4" stroke-linecap="round" stroke-linejoin="round"/><circle cx="1910.5" cy="190.5" r="10.3" fill="none" stroke="#777" stroke-width="2.4" stroke-linecap="round" stroke-linejoin="round"/><path d="M1918 198 L1928 208" fill="none" stroke="#777" stroke-width="2.4" stroke-linecap="round" stroke-linejoin="round"/><path d="M1905 190.5 H1916" fill="none" stroke="#777" stroke-width="2.4" stroke-linecap="round" stroke-linejoin="round"/><circle cx="1990.5" cy="190.5" r="10.3" fill="none" stroke="#777" stroke-width="2.4" stroke-linecap="round" stroke-linejoin="round"/><path d="M1998 198 L2008 208" fill="none" stroke="#777" stroke-width="2.4" stroke-linecap="round" stroke-linejoin="round"/><path d="M1985 190.5 H1996 M1990.5 185 V196" fill="none" stroke="#777" stroke-width="2.4" stroke-linecap="round" stroke-linejoin="round"/><path d="M2063 189 V186 a3 3 0 0 1 3 -3 H2069 M2079 183 H2082 a3 3 0 0 1 3 3 V189 M2085 198.5 V201.5 a3 3 0 0 1 -3 3 H2079 M2069 204.5 H2066 a3 3 0 0 1 -3 -3 V198.5" fill="none" stroke="#777" stroke-width="2.4" stroke-linecap="round" stroke-linejoin="round"/><path d="M2158 185.5 L2148.5 194.3 L2158 203" fill="none" stroke="#777" stroke-width="2.4" stroke-linecap="round" stroke-linejoin="round" stroke-width="3"/><path d="M2215 185.5 L2224.5 194.3 L2215 203" fill="none" stroke="#777" stroke-width="2.4" stroke-linecap="round" stroke-linejoin="round" stroke-width="3"/><path d="M2300.5 209.2 H2292.5 a6 6 0 0 1 -6 -6 V188.5 a6 6 0 0 1 6 -6 H2307.5 a6 6 0 0 1 6 6 V195.2" fill="none" stroke="#f2f2f2" stroke-width="3.3" stroke-linecap="butt"/><path d="M2307.2 194.5 V209.8 M2299.5 202 H2314.8" fill="none" stroke="#f2f2f2" stroke-width="3" stroke-linecap="round" stroke-linejoin="round" stroke-width="3.3"/><rect x="2704.5" y="181" width="35" height="25.5" rx="4" fill="none" stroke="#f2f2f2" stroke-width="3" stroke-linecap="round" stroke-linejoin="round"/><path d="M2722 181 V188 M2722 199.5 V206.5 M2710 193.8 H2734 M2714 189.8 L2710 193.8 L2714 197.8 M2730 189.8 L2734 193.8 L2730 197.8" fill="none" stroke="#f2f2f2" stroke-width="3" stroke-linecap="round" stroke-linejoin="round"/><path d="M3008 178.5 L3040 194 L3008 210 L3013 194 Z" fill="#f2f2f2"/><path d="M573 277 H595.5 M580.5 287.6 H599.5 M580.5 298 H599.5" stroke="#5f5f5f" stroke-width="2.6" stroke-linecap="butt"/><path d="M573.3 282.5 V300" stroke="#5f5f5f" stroke-width="2.8"/><path d="M602 379.8 H618.3 L610.15 392.2 Z" fill="#7b66f0" stroke="#7b66f0" stroke-width="1.5" stroke-linejoin="round"/><path d="M602 740.8 H618.3 L610.15 753.2 Z" fill="#7b66f0" stroke="#7b66f0" stroke-width="1.5" stroke-linejoin="round"/><path d="M602 1382.8 H618.3 L610.15 1395.2 Z" fill="#7b66f0" stroke="#7b66f0" stroke-width="1.5" stroke-linejoin="round"/><circle cx="636.1" cy="452.8" r="3.9" fill="none" stroke="#5f5f5f" stroke-width="2.5" stroke-linecap="round" stroke-linejoin="round"/><path d="M636.1 456.7 V462.5 M628.6 465.5 V462.5 H643.6 V465.5" fill="none" stroke="#5f5f5f" stroke-width="2.5" stroke-linecap="round" stroke-linejoin="round"/><circle cx="628.6" cy="469.6" r="4.1" fill="none" stroke="#5f5f5f" stroke-width="2.5" stroke-linecap="round" stroke-linejoin="round"/><circle cx="643.6" cy="469.6" r="4.1" fill="none" stroke="#5f5f5f" stroke-width="2.5" stroke-linecap="round" stroke-linejoin="round"/><circle cx="636" cy="524.5" r="6.6" fill="none" stroke="#5f5f5f" stroke-width="2.5" stroke-linecap="round" stroke-linejoin="round"/><path d="M625.3 540.5 a10.7 10.7 0 0 1 21.4 0" fill="none" stroke="#5f5f5f" stroke-width="2.5" stroke-linecap="round" stroke-linejoin="round"/><circle cx="632" cy="591.5" r="6.6" fill="none" stroke="#5f5f5f" stroke-width="2.5" stroke-linecap="round" stroke-linejoin="round"/><path d="M621.5 608.5 a10.5 10.5 0 0 1 21 0" fill="none" stroke="#5f5f5f" stroke-width="2.5" stroke-linecap="round" stroke-linejoin="round"/><path d="M643 586 a5.5 5.5 0 0 1 1.5 10.5 M646.5 599.5 a9 9 0 0 1 4 8.5" fill="none" stroke="#5f5f5f" stroke-width="2.5" stroke-linecap="round" stroke-linejoin="round"/><rect x="625.2" y="666" width="21.2" height="13.3" rx="2" fill="none" stroke="#5f5f5f" stroke-width="2.5" stroke-linecap="round" stroke-linejoin="round"/><path d="M628.5 666 V659 a7.3 7.3 0 0 1 14.6 0 V666" fill="none" stroke="#5f5f5f" stroke-width="2.5" stroke-linecap="round" stroke-linejoin="round"/><path d="M637.50 841.00 H628.50 a3.00 3.00 0 0 1 -3.00 -3.00 V817.00 a3.00 3.00 0 0 1 3.00 -3.00 H648.50 a3.00 3.00 0 0 1 3.00 3.00 V829.00" fill="none" stroke="#5f5f5f" stroke-width="2.50" stroke-linecap="round"/><path d="M625.50 820.50 H651.50" stroke="#5f5f5f" stroke-width="2.30"/><circle cx="646.50" cy="836.50" r="7.80" fill="#5f5f5f"/><path d="M642.80 835.00 a4.00 4.00 0 0 1 7.50 -0.50 M650.20 838.00 a4.00 4.00 0 0 1 -7.50 0.50" fill="none" stroke="#eee" stroke-width="1.60" stroke-linecap="round"/><path d="M625.5 897.5 H638.5 V910 H625.5 Z M625.5 897.5 V888 a2 2 0 0 1 2 -2 H638.5 V910 M638.5 897.5 H650 V908 a2 2 0 0 1 -2 2 H638.5" fill="none" stroke="#5f5f5f" stroke-width="2.5" stroke-linecap="round" stroke-linejoin="round"/><path d="M644.5 884.5 L650.5 890.5 L644.5 896.5 L638.5 890.5 Z" fill="none" stroke="#5f5f5f" stroke-width="2.5" stroke-linecap="round" stroke-linejoin="round"/><path d="M623.5 957 a2.5 2.5 0 0 1 2.5 -2.5 H636 L650 968.5 L637 981.5 L623.5 968 Z" fill="none" stroke="#5f5f5f" stroke-width="2.5" stroke-linecap="round" stroke-linejoin="round"/><circle cx="631.2" cy="962.3" r="1.8" fill="#5f5f5f"/><path d="M626.5 1031 L636 1040 L645.5 1031" fill="none" stroke="#5f5f5f" stroke-width="2.5" stroke-linecap="round" stroke-linejoin="round"/><path d="M626.5 1045 H645.5" fill="none" stroke="#5f5f5f" stroke-width="2.5" stroke-linecap="round" stroke-linejoin="round" stroke-width="2.6"/><path d="M636 1091.5 L649 1115.8 H623 Z" fill="none" stroke="#5f5f5f" stroke-width="2.5" stroke-linecap="round" stroke-linejoin="round"/><path d="M636 1099.5 V1106" fill="none" stroke="#5f5f5f" stroke-width="2.5" stroke-linecap="round" stroke-linejoin="round" stroke-width="3.6"/><circle cx="636" cy="1110.8" r="2" fill="#5f5f5f"/><rect x="625.5" y="1161.5" width="4.8" height="21.2" rx="1.2" fill="none" stroke="#5f5f5f" stroke-width="2.5" stroke-linecap="round" stroke-linejoin="round" stroke-width="2.3"/><rect x="642.2" y="1161.5" width="4.8" height="21.2" rx="1.2" fill="none" stroke="#5f5f5f" stroke-width="2.5" stroke-linecap="round" stroke-linejoin="round" stroke-width="2.3"/><path d="M630.3 1172 H642.2" stroke="#5f5f5f" stroke-width="3.6"/><path d="M625.5 1166.5 a3.5 3.5 0 0 0 -3.5 3.5 v4 a3.5 3.5 0 0 0 3.5 3.5 M647 1166.5 a3.5 3.5 0 0 1 3.5 3.5 v4 a3.5 3.5 0 0 1 -3.5 3.5" fill="none" stroke="#5f5f5f" stroke-width="2.5" stroke-linecap="round" stroke-linejoin="round" stroke-width="2.3"/><circle cx="636" cy="1240.2" r="12.6" fill="none" stroke="#5f5f5f" stroke-width="2.5" stroke-linecap="round" stroke-linejoin="round" stroke-width="2.8"/><path d="M636 1232.5 V1240.5 L640.5 1244" fill="none" stroke="#5f5f5f" stroke-width="2.5" stroke-linecap="round" stroke-linejoin="round"/><rect x="621.2" y="1293.2" width="5.6" height="29.6" rx="1" fill="none" stroke="#5f5f5f" stroke-width="2.5" stroke-linecap="round" stroke-linejoin="round"/><rect x="634" y="1293.2" width="5.6" height="29.6" rx="1" fill="none" stroke="#5f5f5f" stroke-width="2.5" stroke-linecap="round" stroke-linejoin="round"/><rect x="646.2" y="1293.2" width="5.6" height="29.6" rx="1" fill="none" stroke="#5f5f5f" stroke-width="2.5" stroke-linecap="round" stroke-linejoin="round"/><path d="M629.5 1462 V1458 a3 3 0 0 1 3 -3 H640.5 L647.8 1462.3 V1479.5 a3 3 0 0 1 -3 3 H638" fill="none" stroke="#5f5f5f" stroke-width="2.5" stroke-linecap="round" stroke-linejoin="round"/><path d="M640.5 1455 V1462.5 H647.8" fill="none" stroke="#5f5f5f" stroke-width="2.5" stroke-linecap="round" stroke-linejoin="round"/><circle cx="629.5" cy="1475.8" r="7.6" fill="#5f5f5f"/><path d="M625.5 1475.8 H633 M630 1472.5 L633.2 1475.8 L630 1479" fill="none" stroke="#eee" stroke-width="1.8" stroke-linecap="round" stroke-linejoin="round"/></svg>
<svg width="3330" height="1608" viewBox="0 0 3330 1608" style="z-index:6"><path d="M1103.44 304.74 H1093.36 a3.36 3.36 0 0 1 -3.36 -3.36 V277.86 a3.36 3.36 0 0 1 3.36 -3.36 H1115.76 a3.36 3.36 0 0 1 3.36 3.36 V291.30" fill="none" stroke="#5f5f5f" stroke-width="2.80" stroke-linecap="round"/><path d="M1090.00 281.78 H1119.12" stroke="#5f5f5f" stroke-width="2.58"/><circle cx="1113.52" cy="299.70" r="8.74" fill="#5f5f5f"/><path d="M1109.38 298.02 a4.48 4.48 0 0 1 8.40 -0.56 M1117.66 301.38 a4.48 4.48 0 0 1 -8.40 0.56" fill="none" stroke="#eee" stroke-width="1.79" stroke-linecap="round"/><circle cx="2496.6" cy="407.7" r="12.8" fill="none" stroke="#0a8ff0" stroke-width="2.4"/><path d="M2496.6 400 V415.4 M2488.9 407.7 H2504.3" stroke="#0a8ff0" stroke-width="2.4" stroke-linecap="round"/></svg>
<svg width="3330" height="1608" viewBox="0 0 3330 1608" style="z-index:11"><path d="M1983.5 356 L2007.5 379 M2007.5 356 L1983.5 379" stroke="#777" stroke-width="2.6" stroke-linecap="round"/></svg>
<svg width="3330" height="1608" viewBox="0 0 3330 1608" style="z-index:12"><path d="M1976 604 L1985 613.5 L1994 604" fill="none" stroke="#4b5058" stroke-width="3.2" stroke-linecap="round" stroke-linejoin="round"/><path d="M1976 995 L1985 1004.5 L1994 995" fill="none" stroke="#4b5058" stroke-width="3.2" stroke-linecap="round" stroke-linejoin="round"/><circle cx="1393.00" cy="1122" r="22" fill="#f8f8f8"/><circle cx="1393.00" cy="1122" r="19.8" fill="#888888"/><circle cx="1447.18" cy="1122" r="22" fill="#f8f8f8"/><circle cx="1447.18" cy="1122" r="19.8" fill="#ff3355"/><circle cx="1501.36" cy="1122" r="22" fill="#f8f8f8"/><circle cx="1501.36" cy="1122" r="19.8" fill="#f96b7e"/><circle cx="1555.54" cy="1122" r="22" fill="#f8f8f8"/><circle cx="1555.54" cy="1122" r="19.8" fill="#fa8a5a"/><circle cx="1609.72" cy="1122" r="22" fill="#f8f8f8"/><circle cx="1609.72" cy="1122" r="19.8" fill="#ffb800"/><circle cx="1663.90" cy="1122" r="22" fill="#f8f8f8"/><circle cx="1663.90" cy="1122" r="19.8" fill="#8ccb00"/><circle cx="1718.08" cy="1122" r="22" fill="#f8f8f8"/><circle cx="1718.08" cy="1122" r="19.8" fill="#00b853"/><circle cx="1772.26" cy="1122" r="22" fill="#f8f8f8"/><circle cx="1772.26" cy="1122" r="19.8" fill="#03a7bb"/><circle cx="1826.44" cy="1122" r="22" fill="#f8f8f8"/><circle cx="1826.44" cy="1122" r="19.8" fill="#0a99fe"/><circle cx="1880.62" cy="1122" r="22" fill="#f8f8f8"/><circle cx="1880.62" cy="1122" r="19.8" fill="#3062fe"/><circle cx="1934.80" cy="1122" r="25.6" fill="#646464"/><circle cx="1934.80" cy="1122" r="19.8" fill="#e0dcff"/><circle cx="1934.80" cy="1122" r="19.2" fill="#7b6cfe"/></svg>
<svg width="3330" height="1608" viewBox="0 0 3330 1608" style="z-index:20"><line x1="2594.8" y1="529.6" x2="2542.20" y2="237.80" stroke="#ee0000" stroke-width="5.2"/><path d="M2537.9 213.5 L2529.8 240.2 L2554.6 235.4 Z" fill="#ee0000"/><line x1="2228.2" y1="645.3" x2="1961.15" y2="729.95" stroke="#ee0000" stroke-width="5.2"/><path d="M1937.9 736.6 L1957.3 718.3 L1965 741.6 Z" fill="#ee0000"/><line x1="2296" y1="1002.4" x2="2097.90" y2="1002.45" stroke="#ee0000" stroke-width="5.2"/><path d="M2072.9 1002.4 L2097.9 990.4 L2097.9 1014.5 Z" fill="#ee0000"/><line x1="2255.6" y1="1115.1" x2="2100.40" y2="1113.20" stroke="#ee0000" stroke-width="5.2"/><path d="M2075.5 1113 L2100.4 1101 L2100.4 1125.4 Z" fill="#ee0000"/><line x1="2187.9" y1="1238.3" x2="2108.20" y2="1238.45" stroke="#ee0000" stroke-width="5.2"/><path d="M2083.2 1238.3 L2108.2 1226.2 L2108.2 1250.7 Z" fill="#ee0000"/></svg>
</body></html>
